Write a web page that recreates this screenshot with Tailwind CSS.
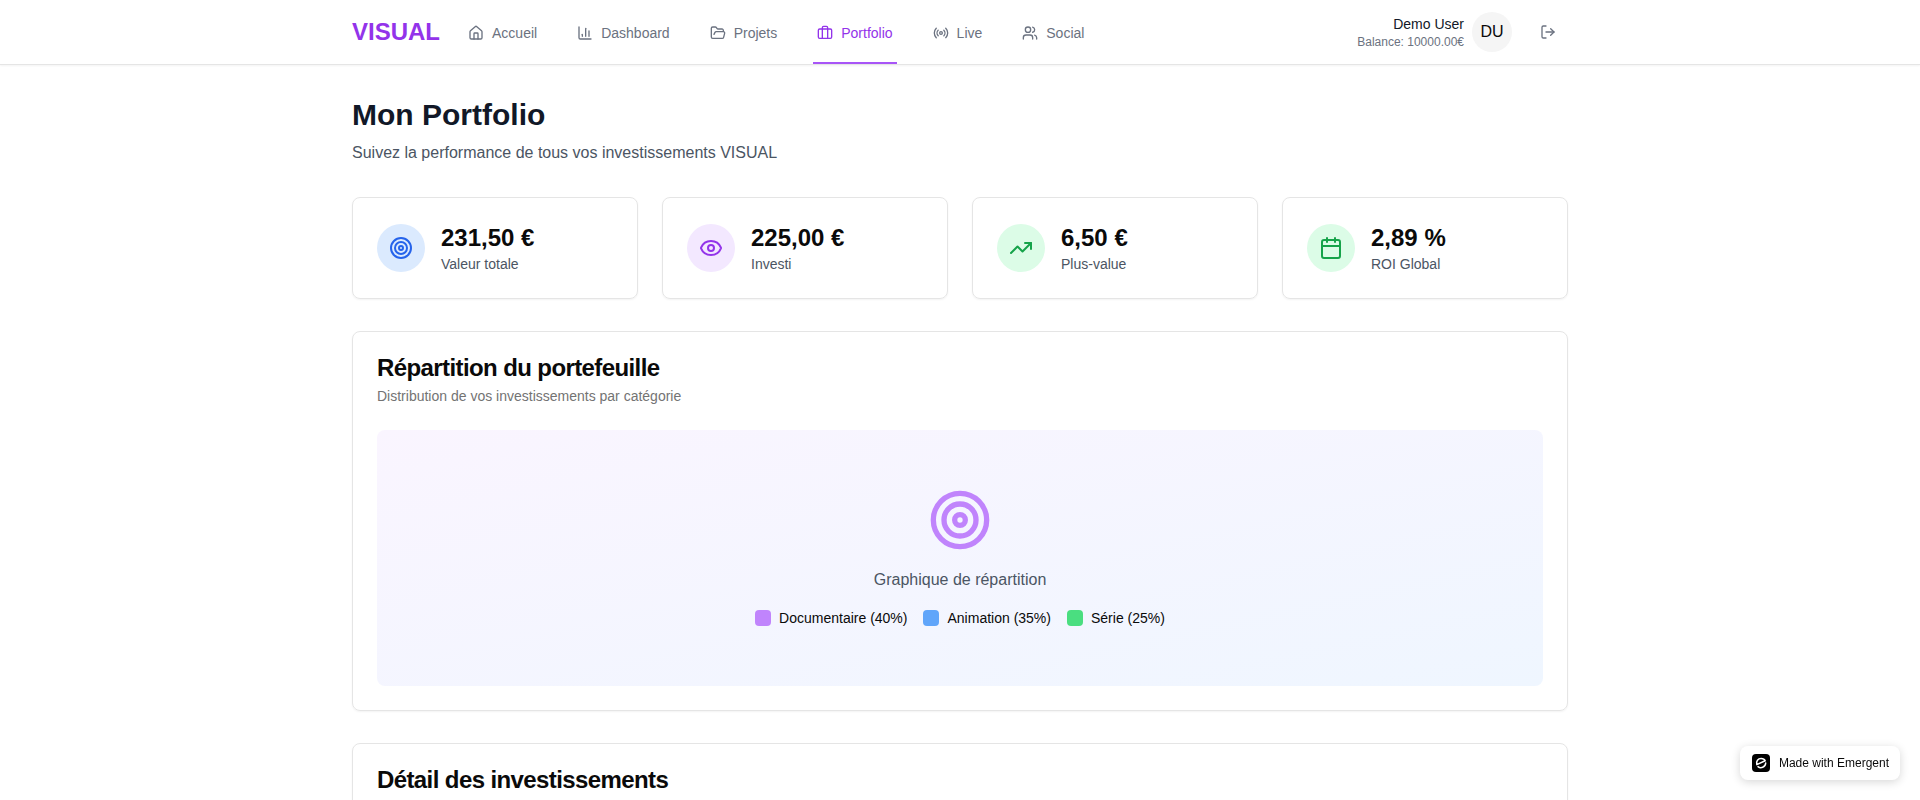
<!DOCTYPE html>
<html lang="fr">
<head>
<meta charset="utf-8">
<meta name="viewport" content="width=device-width, initial-scale=1">
<title>VISUAL – Mon Portfolio</title>
<script src="https://cdn.jsdelivr.net/npm/@tailwindcss/browser@4"></script>
</head>
<body class="min-h-screen bg-white font-['Liberation_Sans',Arial,sans-serif] text-[#0a0a0a]">

<header class="border-b border-[#e5e5e5] bg-white shadow-[0_1px_2px_0_rgb(0_0_0/0.05)]">
  <div class="mx-auto flex h-16 max-w-7xl items-center justify-between px-8">
    <div class="flex h-full items-center gap-6">
      <a href="#" class="text-2xl font-bold text-[#9333ea]">VISUAL</a>
      <nav class="flex h-full gap-8 text-sm text-[#6b7280]" aria-label="Navigation principale">
        <a href="#" class="flex items-center gap-2 border-b-2 border-transparent px-1 pt-1">
          <svg class="size-4" viewBox="0 0 24 24" fill="none" stroke="currentColor" stroke-width="2" stroke-linecap="round" stroke-linejoin="round" aria-hidden="true"><path d="M15 21v-8a1 1 0 0 0-1-1h-4a1 1 0 0 0-1 1v8"/><path d="M3 10a2 2 0 0 1 .709-1.528l7-5.999a2 2 0 0 1 2.582 0l7 5.999A2 2 0 0 1 21 10v9a2 2 0 0 1-2 2H5a2 2 0 0 1-2-2z"/></svg>
          Accueil
        </a>
        <a href="#" class="flex items-center gap-2 border-b-2 border-transparent px-1 pt-1">
          <svg class="size-4" viewBox="0 0 24 24" fill="none" stroke="currentColor" stroke-width="2" stroke-linecap="round" stroke-linejoin="round" aria-hidden="true"><path d="M3 3v16a2 2 0 0 0 2 2h16"/><path d="M18 17V9"/><path d="M13 17V5"/><path d="M8 17v-3"/></svg>
          Dashboard
        </a>
        <a href="#" class="flex items-center gap-2 border-b-2 border-transparent px-1 pt-1">
          <svg class="size-4" viewBox="0 0 24 24" fill="none" stroke="currentColor" stroke-width="2" stroke-linecap="round" stroke-linejoin="round" aria-hidden="true"><path d="m6 14 1.5-2.9A2 2 0 0 1 9.24 10H20a2 2 0 0 1 1.94 2.5l-1.54 6a2 2 0 0 1-1.95 1.5H4a2 2 0 0 1-2-2V5a2 2 0 0 1 2-2h3.9a2 2 0 0 1 1.69.9l.81 1.2a2 2 0 0 0 1.67.9H18a2 2 0 0 1 2 2v2"/></svg>
          Projets
        </a>
        <a href="#" aria-current="page" class="flex items-center gap-2 border-b-2 border-[#a855f7] px-1 pt-1 text-[#9333ea]">
          <svg class="size-4" viewBox="0 0 24 24" fill="none" stroke="currentColor" stroke-width="2" stroke-linecap="round" stroke-linejoin="round" aria-hidden="true"><path d="M16 20V4a2 2 0 0 0-2-2h-4a2 2 0 0 0-2 2v16"/><rect width="20" height="14" x="2" y="6" rx="2"/></svg>
          Portfolio
        </a>
        <a href="#" class="flex items-center gap-2 border-b-2 border-transparent px-1 pt-1">
          <svg class="size-4" viewBox="0 0 24 24" fill="none" stroke="currentColor" stroke-width="2" stroke-linecap="round" stroke-linejoin="round" aria-hidden="true"><path d="M4.9 19.1C1 15.2 1 8.8 4.9 4.9"/><path d="M7.8 16.2c-2.3-2.3-2.3-6.1 0-8.5"/><circle cx="12" cy="12" r="2"/><path d="M16.2 7.8c2.3 2.3 2.3 6.1 0 8.5"/><path d="M19.1 4.9C23 8.8 23 15.1 19.1 19"/></svg>
          Live
        </a>
        <a href="#" class="flex items-center gap-2 border-b-2 border-transparent px-1 pt-1">
          <svg class="size-4" viewBox="0 0 24 24" fill="none" stroke="currentColor" stroke-width="2" stroke-linecap="round" stroke-linejoin="round" aria-hidden="true"><path d="M16 21v-2a4 4 0 0 0-4-4H6a4 4 0 0 0-4 4v2"/><circle cx="9" cy="7" r="4"/><path d="M22 21v-2a4 4 0 0 0-3-3.87"/><path d="M16 3.13a4 4 0 0 1 0 7.75"/></svg>
          Social
        </a>
      </nav>
    </div>
    <div class="flex items-center gap-4">
      <div class="flex items-center gap-2">
        <div class="text-right">
          <p class="text-sm text-[#111827]">Demo User</p>
          <p class="text-xs text-[#6b7280]">Balance: 10000.00€</p>
        </div>
        <span class="flex size-10 items-center justify-center rounded-full bg-[#f5f5f5]">DU</span>
      </div>
      <button type="button" aria-label="Se déconnecter" class="flex h-8 items-center rounded-md px-3 text-[#6b7280]">
        <svg class="size-4" viewBox="0 0 24 24" fill="none" stroke="currentColor" stroke-width="2" stroke-linecap="round" stroke-linejoin="round" aria-hidden="true"><path d="M9 21H5a2 2 0 0 1-2-2V5a2 2 0 0 1 2-2h4"/><path d="m16 17 5-5-5-5"/><path d="M21 12H9"/></svg>
      </button>
    </div>
  </div>
</header>

<main class="mx-auto flex max-w-7xl flex-col gap-8 px-8 py-8">
  <div>
    <h1 class="mb-2 text-3xl font-bold text-[#111827]">Mon Portfolio</h1>
    <p class="text-[#4b5563]">Suivez la performance de tous vos investissements VISUAL</p>
  </div>

  <section class="grid grid-cols-1 gap-6 md:grid-cols-2 lg:grid-cols-4" aria-label="Indicateurs">
    <div class="flex items-center gap-4 rounded-lg border border-[#e5e5e5] p-6 shadow-[0_1px_2px_0_rgb(0_0_0/0.05)]">
      <div class="rounded-full bg-[#dbeafe] p-3 text-[#2563eb]">
        <svg class="size-6" viewBox="0 0 24 24" fill="none" stroke="currentColor" stroke-width="2" aria-hidden="true"><circle cx="12" cy="12" r="10"/><circle cx="12" cy="12" r="6"/><circle cx="12" cy="12" r="2"/></svg>
      </div>
      <div>
        <p class="text-2xl font-bold">231,50 €</p>
        <p class="text-sm text-[#4b5563]">Valeur totale</p>
      </div>
    </div>
    <div class="flex items-center gap-4 rounded-lg border border-[#e5e5e5] p-6 shadow-[0_1px_2px_0_rgb(0_0_0/0.05)]">
      <div class="rounded-full bg-[#f3e8ff] p-3 text-[#9333ea]">
        <svg class="size-6" viewBox="0 0 24 24" fill="none" stroke="currentColor" stroke-width="2" stroke-linecap="round" stroke-linejoin="round" aria-hidden="true"><path d="M2.062 12.348a1 1 0 0 1 0-.696 10.75 10.75 0 0 1 19.876 0 1 1 0 0 1 0 .696 10.75 10.75 0 0 1-19.876 0"/><circle cx="12" cy="12" r="3"/></svg>
      </div>
      <div>
        <p class="text-2xl font-bold">225,00 €</p>
        <p class="text-sm text-[#4b5563]">Investi</p>
      </div>
    </div>
    <div class="flex items-center gap-4 rounded-lg border border-[#e5e5e5] p-6 shadow-[0_1px_2px_0_rgb(0_0_0/0.05)]">
      <div class="rounded-full bg-[#dcfce7] p-3 text-[#16a34a]">
        <svg class="size-6" viewBox="0 0 24 24" fill="none" stroke="currentColor" stroke-width="2" stroke-linecap="round" stroke-linejoin="round" aria-hidden="true"><path d="m22 7-8.5 8.5-5-5L2 17"/><path d="M16 7h6v6"/></svg>
      </div>
      <div>
        <p class="text-2xl font-bold">6,50 €</p>
        <p class="text-sm text-[#4b5563]">Plus-value</p>
      </div>
    </div>
    <div class="flex items-center gap-4 rounded-lg border border-[#e5e5e5] p-6 shadow-[0_1px_2px_0_rgb(0_0_0/0.05)]">
      <div class="rounded-full bg-[#dcfce7] p-3 text-[#16a34a]">
        <svg class="size-6" viewBox="0 0 24 24" fill="none" stroke="currentColor" stroke-width="2" stroke-linecap="round" stroke-linejoin="round" aria-hidden="true"><path d="M8 2v4"/><path d="M16 2v4"/><rect width="18" height="18" x="3" y="4" rx="2"/><path d="M3 10h18"/></svg>
      </div>
      <div>
        <p class="text-2xl font-bold">2,89 %</p>
        <p class="text-sm text-[#4b5563]">ROI Global</p>
      </div>
    </div>
  </section>

  <section class="flex flex-col gap-6 rounded-lg border border-[#e5e5e5] p-6 shadow-[0_1px_2px_0_rgb(0_0_0/0.05)]">
    <div class="flex flex-col gap-1.5">
      <h2 class="text-2xl leading-none font-semibold tracking-tight">Répartition du portefeuille</h2>
      <p class="text-sm text-[#737373]">Distribution de vos investissements par catégorie</p>
    </div>
    <div class="flex min-h-64 flex-col items-center justify-center gap-4 rounded-lg bg-linear-to-br/srgb from-[#faf5ff] to-[#eff6ff]">
      <svg class="size-16 text-[#c084fc]" viewBox="0 0 24 24" fill="none" stroke="currentColor" stroke-width="2" aria-hidden="true"><circle cx="12" cy="12" r="10"/><circle cx="12" cy="12" r="6"/><circle cx="12" cy="12" r="2"/></svg>
      <p class="text-[#4b5563]">Graphique de répartition</p>
      <ul class="flex flex-wrap justify-center gap-4 text-sm">
        <li class="flex items-center gap-2"><span class="size-4 rounded bg-[#c084fc]"></span>Documentaire (40%)</li>
        <li class="flex items-center gap-2"><span class="size-4 rounded bg-[#60a5fa]"></span>Animation (35%)</li>
        <li class="flex items-center gap-2"><span class="size-4 rounded bg-[#4ade80]"></span>Série (25%)</li>
      </ul>
    </div>
  </section>

  <section class="min-h-24 rounded-lg border border-[#e5e5e5] p-6 shadow-[0_1px_2px_0_rgb(0_0_0/0.05)]">
    <h2 class="text-2xl leading-none font-semibold tracking-tight">Détail des investissements</h2>
  </section>
</main>

<a href="#" class="fixed right-5 bottom-5 flex items-center gap-[9px] rounded-lg bg-white py-2 pr-[11px] pl-3 text-xs shadow-[0_2px_10px_0_rgb(0_0_0/0.16)]">
  <svg class="size-[18px]" viewBox="0 0 18 18" fill="none" aria-hidden="true">
    <rect width="18" height="18" rx="4" fill="#000"/>
    <path d="M4.800 10.600C3.900 7.200 6 4.500 9.100 4.500c2 0 3.500.9 4.100 2.300L4.800 10.600M6 12.600c2.700 2.200 7.200.8 7.700-3.500" stroke="#fff" stroke-width="1.500" stroke-linecap="round" stroke-linejoin="round"/>
  </svg>
  Made with Emergent
</a>
</body>
</html>
